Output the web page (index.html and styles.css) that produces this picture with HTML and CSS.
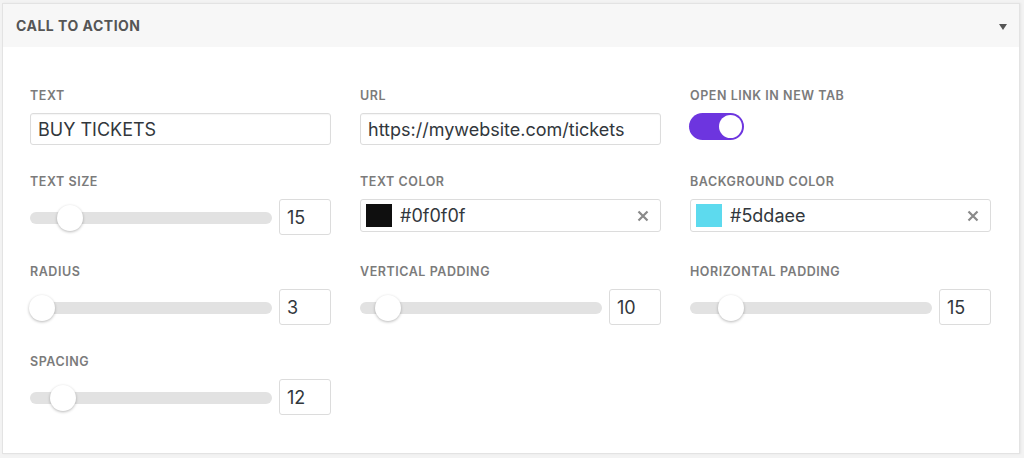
FILE: index.html
```html
<!DOCTYPE html>
<html>
<head>
<meta charset="utf-8">
<link rel="stylesheet" href="styles.css">
</head>
<body>
<div class="panel">
  <div class="panel-header">
    <span class="panel-title">CALL TO ACTION</span>
    <span class="caret"></span>
  </div>
  <div class="panel-body">
    <div class="field">
      <div class="label">TEXT</div>
      <div class="text-input">BUY TICKETS</div>
    </div>
    <div class="field">
      <div class="label">URL</div>
      <div class="text-input">https://mywebsite.com/tickets</div>
    </div>
    <div class="field">
      <div class="label">OPEN LINK IN NEW TAB</div>
      <div class="toggle"><span class="toggle-knob"></span></div>
    </div>

    <div class="field">
      <div class="label">TEXT SIZE</div>
      <div class="range-row">
        <div class="track"><span class="thumb" style="left: 27px"></span></div>
        <div class="num">15</div>
      </div>
    </div>
    <div class="field">
      <div class="label">TEXT COLOR</div>
      <div class="color-input">
        <span class="swatch swatch-dark"></span>
        <span class="color-value">#0f0f0f</span>
        <svg class="clear" width="12" height="12" viewBox="0 0 12 12"><path d="M1.5 1.5L10.5 10.5M10.5 1.5L1.5 10.5" stroke="#8a8a8a" stroke-width="2.2" stroke-linecap="butt"/></svg>
      </div>
    </div>
    <div class="field">
      <div class="label">BACKGROUND COLOR</div>
      <div class="color-input">
        <span class="swatch swatch-cyan"></span>
        <span class="color-value">#5ddaee</span>
        <svg class="clear" width="12" height="12" viewBox="0 0 12 12"><path d="M1.5 1.5L10.5 10.5M10.5 1.5L1.5 10.5" stroke="#8a8a8a" stroke-width="2.2" stroke-linecap="butt"/></svg>
      </div>
    </div>

    <div class="field">
      <div class="label">RADIUS</div>
      <div class="range-row">
        <div class="track"><span class="thumb" style="left: -1px"></span></div>
        <div class="num">3</div>
      </div>
    </div>
    <div class="field">
      <div class="label">VERTICAL PADDING</div>
      <div class="range-row">
        <div class="track"><span class="thumb" style="left: 15px"></span></div>
        <div class="num">10</div>
      </div>
    </div>
    <div class="field">
      <div class="label">HORIZONTAL PADDING</div>
      <div class="range-row">
        <div class="track"><span class="thumb" style="left: 28px"></span></div>
        <div class="num">15</div>
      </div>
    </div>

    <div class="field">
      <div class="label">SPACING</div>
      <div class="range-row">
        <div class="track"><span class="thumb" style="left: 20px"></span></div>
        <div class="num">12</div>
      </div>
    </div>
  </div>
</div>
</body>
</html>
```
FILE: styles.css
```css
* { box-sizing: border-box; }

html, body {
  margin: 0;
  padding: 0;
  background: #f3f3f3;
  font-family: Inter, "Liberation Sans", sans-serif;
}

body {
  padding: 3px 4px 0 2px;
  height: 458px;
  overflow: hidden;
}

.panel {
  border: 1px solid #e3e3e3;
  background: #fff;
  box-shadow: 1px 0 2px rgba(0,0,0,0.06);
}

.panel-header {
  height: 43px;
  background: #f7f7f7;
  display: flex;
  align-items: center;
  justify-content: space-between;
  padding: 0 12px 0 13px;
}

.panel-title {
  font-size: 14px;
  font-weight: 700;
  color: #555;
  letter-spacing: 0.5px;
}

.caret {
  width: 0;
  height: 0;
  border-left: 4px solid transparent;
  border-right: 4px solid transparent;
  border-top: 6px solid #555;
  margin-top: 2px;
}

.panel-body {
  display: grid;
  grid-template-columns: 1fr 1fr 1fr;
  column-gap: 29px;
  row-gap: 30px;
  padding: 42px 28px 38px 27px;
  align-items: start;
}

.label {
  font-size: 12.5px;
  line-height: 14px;
  font-weight: 600;
  color: #7b7b7b;
  letter-spacing: 0.55px;
  margin-bottom: 10px;
}

.text-input {
  height: 32px;
  border: 1px solid #dcdcdc;
  border-radius: 3px;
  box-shadow: inset 0 1px 1px rgba(0,0,0,0.04);
  padding: 0 7px;
  display: flex;
  align-items: center;
  font-size: 18px;
  color: #32373c;
}

.toggle {
  width: 55px;
  height: 27px;
  margin-top: 1px;
  margin-left: -1px;
  border-radius: 14px;
  background: #6d35df;
  position: relative;
}

.toggle-knob {
  position: absolute;
  right: 2px;
  top: 2px;
  width: 23px;
  height: 23px;
  border-radius: 50%;
  background: #fff;
}

.range-row {
  display: flex;
  align-items: center;
  gap: 7px;
}

.track {
  flex: 1;
  height: 12px;
  border-radius: 6px;
  background: #e2e2e2;
  position: relative;
  margin-top: 2px;
}

.thumb {
  position: absolute;
  top: -7px;
  width: 26px;
  height: 26px;
  border-radius: 50%;
  background: #fff;
  box-shadow: 0 1px 3px rgba(0,0,0,0.28);
}

.num {
  width: 52px;
  height: 36px;
  flex: none;
  border: 1px solid #dcdcdc;
  border-radius: 3px;
  padding: 0 7px;
  display: flex;
  align-items: center;
  font-size: 18px;
  color: #32373c;
}

.color-input {
  height: 33px;
  border: 1px solid #dcdcdc;
  border-radius: 3px;
  display: flex;
  align-items: center;
  padding: 0 11px 0 5px;
  font-size: 18px;
  color: #32373c;
}

.swatch {
  width: 26px;
  height: 23px;
  flex: none;
  border: 1px solid #ddd;
}

.swatch-dark { background: #0f0f0f; border-color: #0f0f0f; }
.swatch-cyan { background: #5ddaee; border-color: #5ddaee; }

.color-value {
  margin-left: 8px;
  flex: 1;
}

.clear { flex: none; }
```
